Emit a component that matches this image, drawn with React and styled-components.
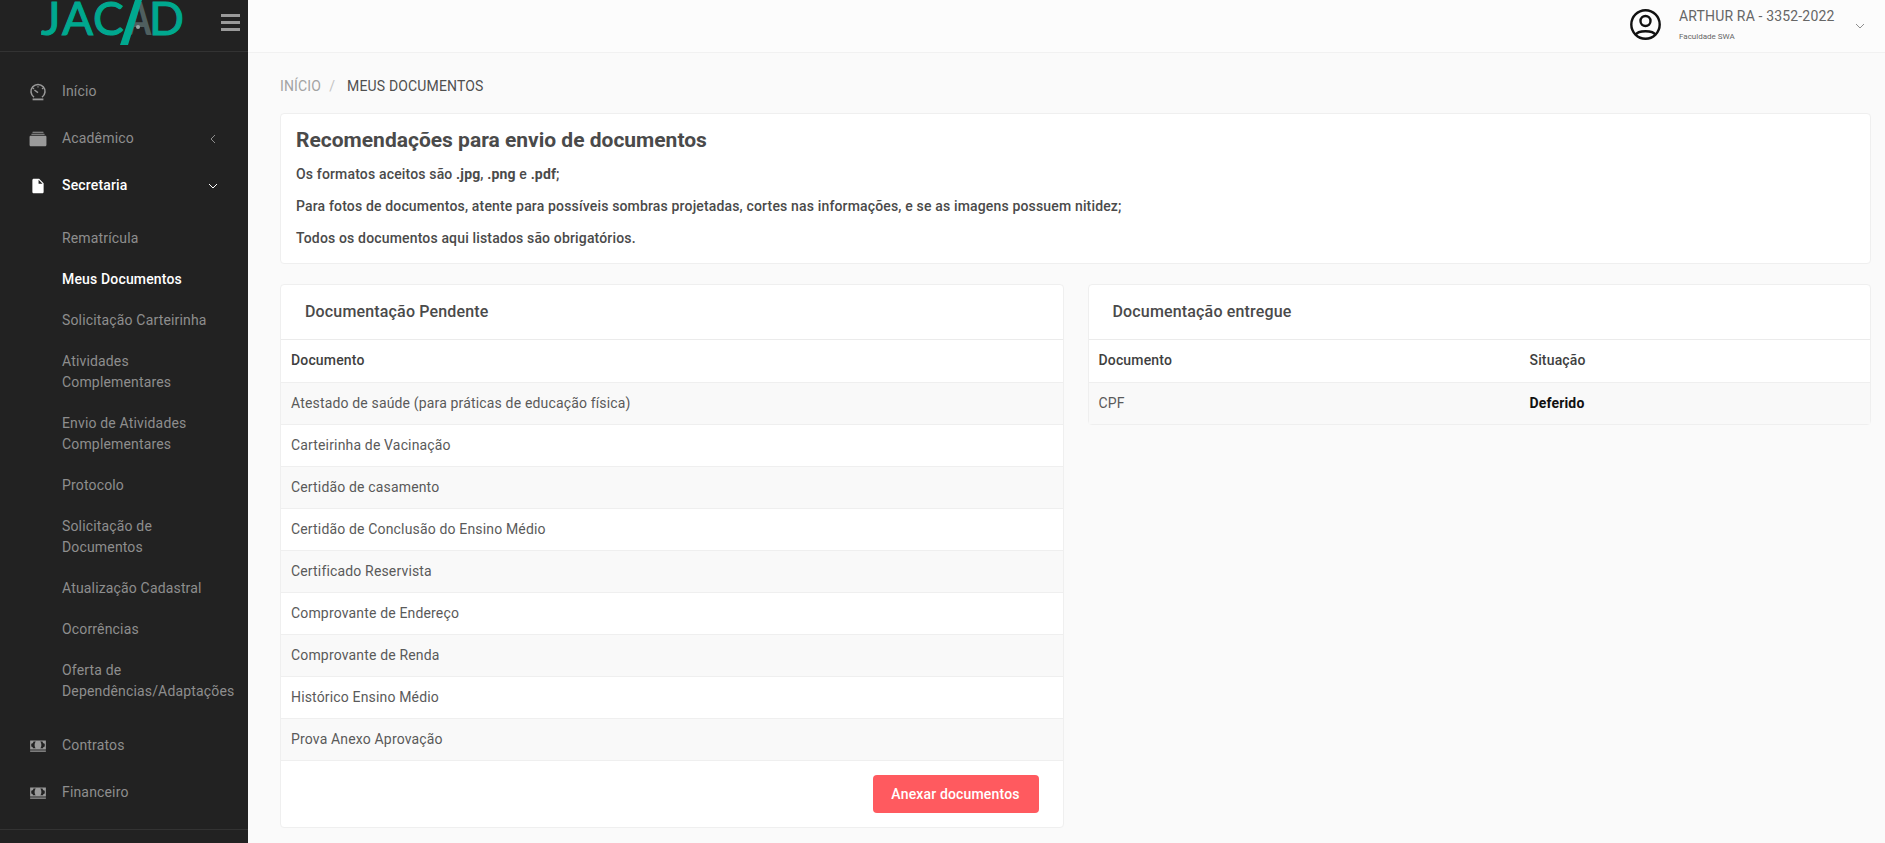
import React from "react";
import styled, { createGlobalStyle } from "styled-components";
import { IoMdCash, IoMdDocument, IoIosAlbums } from "react-icons/io";

const GlobalStyle = createGlobalStyle`
  html, body {
    margin: 0;
    height: 100%;
    overflow: hidden;
    background: #fafafa;
    font-family: Roboto, "Liberation Sans", sans-serif;
    font-size: 14px;
    line-height: 21px;
    letter-spacing: 0.16px;
    color: #4a4a4a;
  }
  * { box-sizing: border-box; }
`;

const Layout = styled.div`
  display: flex;
  height: 843px;
`;

const Sidebar = styled.aside`
  width: 248px;
  flex: none;
  height: 843px;
  background: #222222;
  display: flex;
  flex-direction: column;
`;

const Brand = styled.div`
  height: 52px;
  flex: none;
  display: flex;
  align-items: flex-start;
  justify-content: space-between;
  padding: 0 8px 0 41px;
  border-bottom: 1px solid #333333;
`;

const Burger = styled.div`
  display: flex;
  flex-direction: column;
  gap: 4px;
  width: 19px;
  margin-top: 14px;
  span {
    height: 3px;
    background: #9a9a9a;
  }
`;

const Nav = styled.nav`
  flex: 1;
  padding-top: 16px;
  border-bottom: 1px solid #333333;
  margin-bottom: 13px;
`;

const NavItem = styled.div`
  height: 47px;
  display: flex;
  align-items: center;
  padding: 0 30px 0 29px;
  color: ${(p) => (p.$active ? "#ffffff" : "#8e8e8e")};
  font-weight: ${(p) => (p.$active ? 500 : 400)};
  svg.lead {
    width: 18px;
    height: 18px;
    flex: none;
    margin-right: 15px;
    color: ${(p) => (p.$active ? "#ffffff" : "#9a9a9a")};
  }
  span {
    flex: 1;
  }
`;

const SubList = styled.div`
  padding: 9px 0 10px;
`;

const SubItem = styled.div`
  padding: 10px 12px 10px 62px;
  color: ${(p) => (p.$active ? "#ffffff" : "#8e8e8e")};
  font-weight: ${(p) => (p.$active ? 500 : 400)};
`;

const Main = styled.main`
  flex: 1;
  min-width: 0;
`;

const Topbar = styled.header`
  height: 53px;
  display: flex;
  justify-content: flex-end;
  align-items: center;
  padding-right: 20px;
  border-bottom: 1px solid #f1f1f1;
  background: #fcfcfc;
`;

const UserAvatar = styled.svg`
  width: 31px;
  height: 31px;
  margin-right: 18px;
  margin-top: -3px;
  color: #111111;
`;

const UserInfo = styled.div`
  width: 176px;
  margin-top: -4px;
`;

const UserName = styled.div`
  font-size: 14px;
  line-height: 20px;
  color: #666666;
`;

const UserOrg = styled.div`
  font-size: 8px;
  line-height: 12px;
  margin-top: 5px;
  letter-spacing: 0;
  color: #666666;
`;

const Content = styled.div`
  padding: 23px 14px 0 32px;
`;

const Breadcrumb = styled.div`
  display: flex;
  align-items: center;
  height: 21px;
  margin-bottom: 16px;
  color: #4f4f4f;
  text-transform: uppercase;
`;

const CrumbLink = styled.span`
  color: #a3a3a3;
`;

const CrumbSep = styled.span`
  color: #c4c4c4;
  margin: 0 12px 0 8px;
`;

const Card = styled.section`
  background: #ffffff;
  border: 1px solid #efefef;
  border-radius: 4px;
`;

const Notice = styled(Card)`
  padding: 14px 15px 3px;
  margin-bottom: 20px;
  font-weight: 500;
  color: #4a4a4a;
  h3 {
    margin: 0 0 12px;
    font-size: 21px;
    line-height: 24px;
    font-weight: 700;
    letter-spacing: 0;
    color: #4a4a4a;
  }
  p {
    margin: 0 0 11px;
  }
  b {
    font-weight: 700;
  }
`;

const Columns = styled.div`
  display: grid;
  grid-template-columns: 1fr 1fr;
  gap: 24px;
  align-items: start;
`;

const CardTitle = styled.div`
  padding: 16px 24px;
  height: 55px;
  font-size: 16px;
  line-height: 21px;
  font-weight: 500;
  color: #4a4a4a;
  border-bottom: 1px solid #ebebeb;
`;

const Table = styled.table`
  width: 100%;
  border-collapse: collapse;
  table-layout: fixed;
  th, td {
    padding: 10px;
    height: 42px;
    text-align: left;
    border-bottom: 1px solid #efefef;
  }
  th {
    font-weight: 500;
    color: #3f3f3f;
  }
  th:first-child {
    width: ${(p) => p.$firstCol || "auto"};
  }
  td {
    color: #5a5a5a;
  }
  tbody tr:nth-child(odd) {
    background: #f9f9f9;
  }
  tbody tr:last-child td {
    border-bottom: ${(p) => (p.$flush ? "none" : "1px solid #efefef")};
  }
`;

const Status = styled.td`
  && {
    font-weight: 700;
    color: #111111;
  }
`;

const CardFooter = styled.div`
  display: flex;
  justify-content: flex-end;
  padding: 14px 24px;
`;

const Button = styled.button`
  width: 166px;
  height: 38px;
  border: 0;
  border-radius: 4px;
  background: #ff5a5f;
  color: #ffffff;
  letter-spacing: 0.16px;
  font: 500 14px Roboto, sans-serif;
`;

const Chevron = ({ dir = "down", color = "#8e8e8e", size = 10 }) => (
  <svg width={size} height={size} viewBox="0 0 10 10" fill="none" stroke={color} strokeWidth="1">
    {dir === "down" ? <path d="M1 3l4 4 4-4" /> : <path d="M7 1L3 5l4 4" />}
  </svg>
);

const GaugeIcon = () => (
  <svg className="lead" viewBox="0 0 18 18" fill="none" stroke="currentColor">
    <path strokeWidth="1.6" d="M5 14.2A7 7 0 1 1 13 14.2" />
    <path strokeWidth="1.4" d="M5.4 7l3.6 2.6" />
    <path strokeWidth="1.2" d="M4 5l1 1M14 5l-1 1M9 3.2v1.4" />
    <path strokeWidth="1.8" d="M3.6 16.4h10.8" />
  </svg>
);

const Logo = () => (
  <svg width="146" height="46" viewBox="0 0 146 46">
    <g fontFamily="Lato, sans-serif" fontSize="46" fill="#00a88f" stroke="#00a88f" strokeWidth="1.1">
      <text x="0" y="35">J</text>
      <text x="21" y="35">A</text>
      <text x="52" y="35">C</text>
      <text x="108" y="35">D</text>
    </g>
    <text
      transform="translate(86 35) scale(.75 1)"
      fontFamily="Lato, sans-serif"
      fontSize="46"
      fontWeight="900"
      fill="#4f5f5f"
    >
      A
    </text>
    <circle cx="97" cy="27" r="2" fill="#9aa5a5" />
    <polygon points="94,0 101,0 87,45 79,45" fill="#00a88f" />
  </svg>
);

const subItems = [
  ["Rematrícula"],
  ["Meus Documentos", true],
  ["Solicitação Carteirinha"],
  ["Atividades Complementares"],
  ["Envio de Atividades Complementares"],
  ["Protocolo"],
  ["Solicitação de Documentos"],
  ["Atualização Cadastral"],
  ["Ocorrências"],
  ["Oferta de Dependências/Adaptações"],
];

const pending = [
  "Atestado de saúde (para práticas de educação física)",
  "Carteirinha de Vacinação",
  "Certidão de casamento",
  "Certidão de Conclusão do Ensino Médio",
  "Certificado Reservista",
  "Comprovante de Endereço",
  "Comprovante de Renda",
  "Histórico Ensino Médio",
  "Prova Anexo Aprovação",
];

export default function App() {
  return (
    <>
      <GlobalStyle />
      <Layout>
        <Sidebar>
          <Brand>
            <Logo />
            <Burger>
              <span />
              <span />
              <span />
            </Burger>
          </Brand>
          <Nav>
            <NavItem>
              <GaugeIcon />
              <span>Início</span>
            </NavItem>
            <NavItem>
              <IoIosAlbums className="lead" />
              <span>Acadêmico</span>
              <Chevron dir="left" />
            </NavItem>
            <NavItem $active>
              <IoMdDocument className="lead" />
              <span>Secretaria</span>
              <Chevron color="#ffffff" />
            </NavItem>
            <SubList>
              {subItems.map(([label, active]) => (
                <SubItem key={label} $active={active}>
                  {label}
                </SubItem>
              ))}
            </SubList>
            <NavItem>
              <IoMdCash className="lead" />
              <span>Contratos</span>
            </NavItem>
            <NavItem>
              <IoMdCash className="lead" />
              <span>Financeiro</span>
            </NavItem>
          </Nav>
        </Sidebar>
        <Main>
          <Topbar>
            <UserAvatar viewBox="0 0 31 31" fill="none" stroke="currentColor" strokeWidth="2.4">
              <circle cx="15.5" cy="15.5" r="14.2" />
              <circle cx="15.5" cy="12" r="5" />
              <path d="M5.5 26c2.5-5 17.5-5 20 0" />
            </UserAvatar>
            <UserInfo>
              <UserName>ARTHUR RA - 3352-2022</UserName>
              <UserOrg>Faculdade SWA</UserOrg>
            </UserInfo>
            <Chevron />
          </Topbar>
          <Content>
            <Breadcrumb>
              <CrumbLink>Início</CrumbLink>
              <CrumbSep>/</CrumbSep>
              Meus Documentos
            </Breadcrumb>
            <Notice>
              <h3>Recomendações para envio de documentos</h3>
              <p>
                Os formatos aceitos são <b>.jpg</b>, <b>.png</b> e <b>.pdf</b>;
              </p>
              <p>
                Para fotos de documentos, atente para possíveis sombras projetadas, cortes nas
                informações, e se as imagens possuem nitidez;
              </p>
              <p>Todos os documentos aqui listados são obrigatórios.</p>
            </Notice>
            <Columns>
              <Card>
                <CardTitle>Documentação Pendente</CardTitle>
                <Table>
                  <thead>
                    <tr>
                      <th>Documento</th>
                    </tr>
                  </thead>
                  <tbody>
                    {pending.map((doc) => (
                      <tr key={doc}>
                        <td>{doc}</td>
                      </tr>
                    ))}
                  </tbody>
                </Table>
                <CardFooter>
                  <Button>Anexar documentos</Button>
                </CardFooter>
              </Card>
              <Card>
                <CardTitle>Documentação entregue</CardTitle>
                <Table $flush $firstCol="431px">
                  <thead>
                    <tr>
                      <th>Documento</th>
                      <th>Situação</th>
                    </tr>
                  </thead>
                  <tbody>
                    <tr>
                      <td>CPF</td>
                      <Status>Deferido</Status>
                    </tr>
                  </tbody>
                </Table>
              </Card>
            </Columns>
          </Content>
        </Main>
      </Layout>
    </>
  );
}
